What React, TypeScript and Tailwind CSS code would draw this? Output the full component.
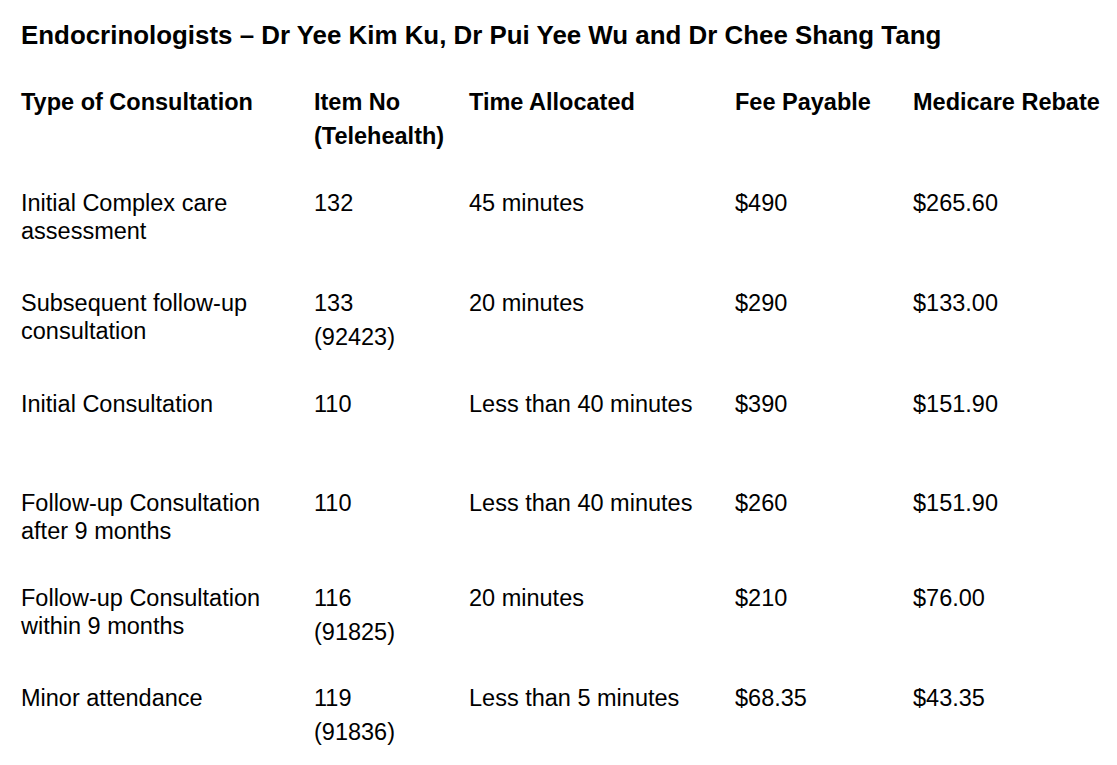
const rows = [
  {
    h: "h-[100px]",
    type: ["Initial Complex care", "assessment"],
    item: ["132"],
    time: "45 minutes",
    fee: "$490",
    rebate: "$265.60",
  },
  {
    h: "h-[101px]",
    type: ["Subsequent follow-up", "consultation"],
    item: ["133", "(92423)"],
    time: "20 minutes",
    fee: "$290",
    rebate: "$133.00",
  },
  {
    h: "h-[99px]",
    type: ["Initial Consultation"],
    item: ["110"],
    time: "Less than 40 minutes",
    fee: "$390",
    rebate: "$151.90",
  },
  {
    h: "h-[95px]",
    type: ["Follow-up Consultation", "after 9 months"],
    item: ["110"],
    time: "Less than 40 minutes",
    fee: "$260",
    rebate: "$151.90",
  },
  {
    h: "h-[100px]",
    type: ["Follow-up Consultation", "within 9 months"],
    item: ["116", "(91825)"],
    time: "20 minutes",
    fee: "$210",
    rebate: "$76.00",
  },
  {
    h: "h-[81px]",
    type: ["Minor attendance"],
    item: ["119", "(91836)"],
    time: "Less than 5 minutes",
    fee: "$68.35",
    rebate: "$43.35",
  },
];

const cols = "grid grid-cols-[293px_155px_266px_178px_1fr]";

function Lines({ lines, gap }: { lines: string[]; gap?: boolean }) {
  return (
    <div className="flex flex-col">
      {lines.map((l, i) => (
        <span key={i} className={i > 0 && gap ? "mt-[6px]" : ""}>
          {l}
        </span>
      ))}
    </div>
  );
}

export default function App() {
  return (
    <div className="min-h-[765px] w-[1117px] bg-white pl-[21px] pt-[21px] text-[23.5px] leading-[28px] text-black [font-family:'Liberation_Sans',Arial,sans-serif]">
      <h1 className="h-[67px] whitespace-nowrap text-[25.9px] font-bold">
        Endocrinologists – Dr Yee Kim Ku, Dr Pui Yee Wu and Dr Chee Shang Tang
      </h1>
      <div className={`${cols} h-[101px] font-bold`}>
        <span>Type of Consultation</span>
        <Lines lines={["Item No", "(Telehealth)"]} gap />
        <span>Time Allocated</span>
        <span>Fee Payable</span>
        <span className="whitespace-nowrap">Medicare Rebate</span>
      </div>
      {rows.map((r, i) => (
        <div key={i} className={`${cols} ${r.h}`}>
          <Lines lines={r.type} />
          <Lines lines={r.item} gap />
          <span>{r.time}</span>
          <span>{r.fee}</span>
          <span>{r.rebate}</span>
        </div>
      ))}
    </div>
  );
}
